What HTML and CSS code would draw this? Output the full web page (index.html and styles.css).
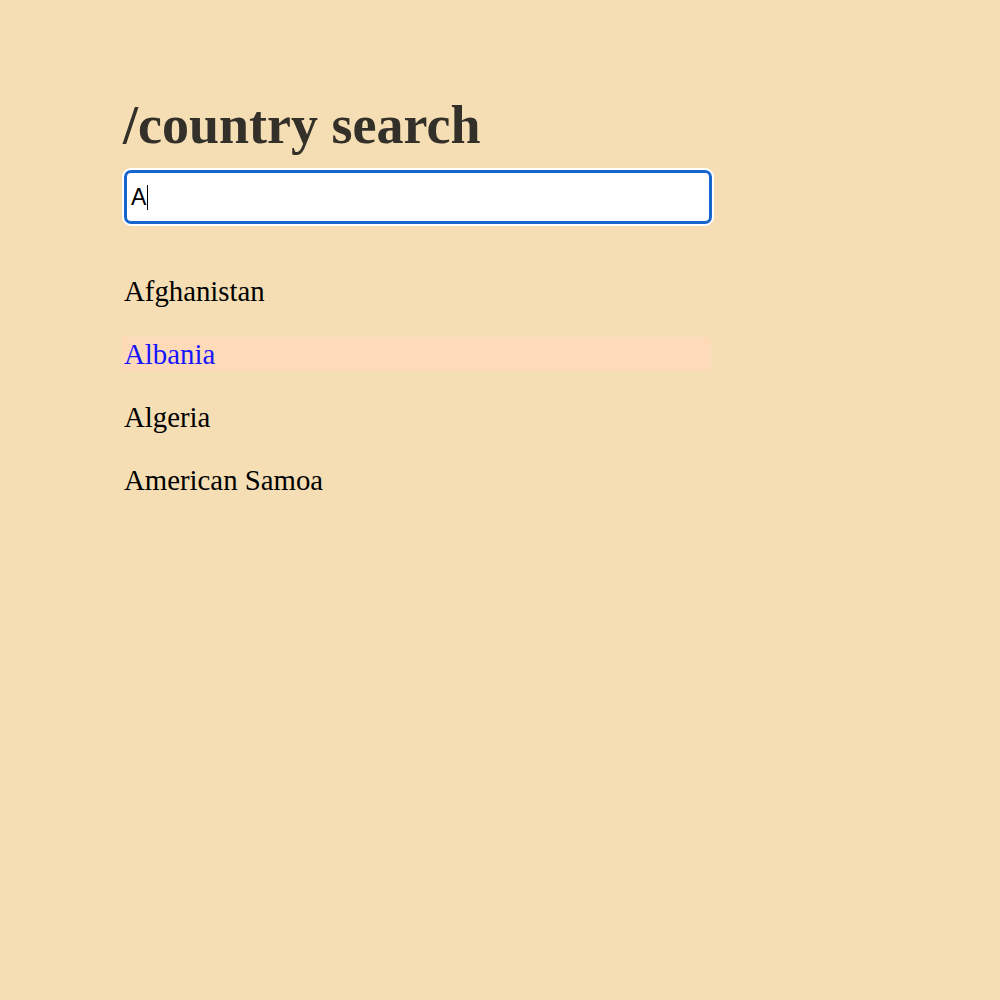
FILE: index.html
```html
<!DOCTYPE html>
<html lang="en">
<head>
<meta charset="utf-8">
<title>country search</title>
<link rel="stylesheet" href="styles.css">
</head>
<body>
<main class="app">
  <h1 class="title">/country search</h1>
  <div class="search"><input class="search-input" type="text" value="A"><span class="caret"></span></div>
  <ul class="results">
    <li class="result">Afghanistan</li>
    <li class="result result-active">Albania</li>
    <li class="result">Algeria</li>
    <li class="result">American Samoa</li>
  </ul>
</main>
</body>
</html>
```
FILE: styles.css
```css
html, body {
  margin: 0;
  padding: 0;
  background: #f5deb3;
}
body {
  font-family: "Liberation Serif", "Times New Roman", serif;
  color: #000;
}
.app {
  width: 589px;
  margin-left: 122px;
  padding-top: 94px;
}
.title {
  margin: 0;
  font-size: 54px;
  font-weight: bold;
  line-height: 62px;
  color: #33302a;
  padding-left: 1px;
}
.search {
  position: relative;
  margin-top: 14px;
  margin-left: 2px;
}
.search-input {
  display: block;
  box-sizing: border-box;
  width: 588px;
  height: 54px;
  margin: 0;
  padding: 0 4px;
  border: 3px solid #1766d0;
  border-radius: 7px;
  box-shadow: 0 0 0 2px #fff;
  background: #fff;
  outline: none;
  font-family: "Liberation Sans", Arial, sans-serif;
  font-size: 23px;
  color: #000;
}
.caret {
  position: absolute;
  left: 23px;
  top: 15px;
  width: 1px;
  height: 25px;
  background: #000;
}
.results {
  list-style: none;
  margin: 50px 0 0;
  padding: 0;
  display: flex;
  flex-direction: column;
  gap: 29px;
}
.result {
  font-size: 28.8px;
  line-height: 33px;
  padding: 1px 0 0 2px;
}
.result-active {
  background: #ffdab9;
  color: #1515ff;
}
```
